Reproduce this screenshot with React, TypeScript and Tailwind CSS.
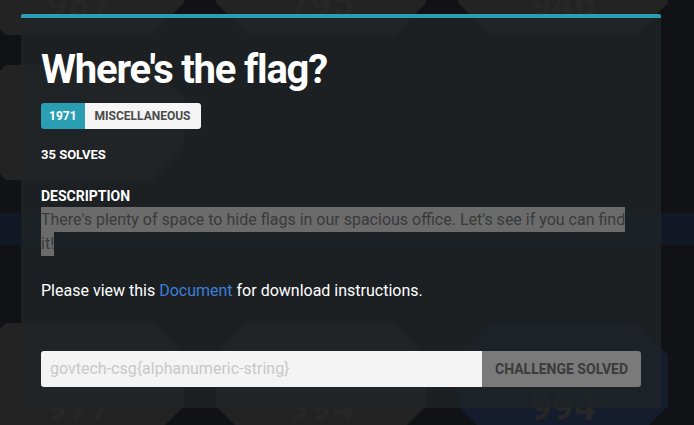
const heading = "font-['Roboto','Liberation_Sans',sans-serif] font-bold";
const body = "font-['Roboto','Liberation_Sans',sans-serif]";

function Card({ title, value, solved }: { title?: string; value: string; solved?: boolean }) {
  return (
    <div
      className={`flex h-full w-[210px] shrink-0 flex-col items-center justify-end pb-3 [clip-path:polygon(32px_0,calc(100%-32px)_0,100%_32px,100%_calc(100%-32px),calc(100%-32px)_100%,32px_100%,0_calc(100%-32px),0_32px)] ${
        solved ? 'bg-[#141c2e]' : 'bg-[#232323]'
      }`}
    >
      {title && <p className={`${heading} text-[15px] text-[#272727]`}>{title}</p>}
      <p className={`${heading} text-[38px] leading-none text-[#272727]`}>{value}</p>
    </div>
  );
}

export default function App() {
  return (
    <div className="relative h-[425px] w-[694px] overflow-hidden bg-[#101215]">
      {/* challenge board behind the modal */}
      <div className="-ml-[26px] -mt-[80px] flex flex-col">
        <div className="flex h-[115px] gap-[32px]">
          <Card value="987" />
          <Card value="795" />
          <Card value="946" />
        </div>
        <div className="mt-[30px] flex h-[115px] gap-[32px]">
          <Card title="Where's the flag?" value="1971" />
        </div>
        <div className="mt-[33px] h-[32px] w-[760px] bg-[#121826]" />
        <div className="mt-[78px] flex h-[115px] gap-[32px]">
          <Card value="977" />
          <Card value="994" />
          <Card title="All about Kompany!" value="994" solved />
        </div>
      </div>

      {/* modal */}
      <div className="absolute left-[21px] top-[14px] flex h-[394px] w-[640px] flex-col rounded-t-[2px] border-t-4 border-[#2a9fb3] bg-[#1f2427]/80 px-5 pt-[28px]">
        <h1 className={`${heading} text-[40px] leading-[48px] tracking-[-1.2px] text-white`}>Where's the flag?</h1>
        <div className={`${heading} mt-[9px] flex h-[26px] w-fit overflow-hidden rounded-[3px] text-[12px]`}>
          <span className="flex items-center bg-[#2a9fb3] px-[8px] text-white">1971</span>
          <span className="flex items-center bg-[#f5f5f5] px-[10px] text-[#4a4a4a]">MISCELLANEOUS</span>
        </div>
        <p className={`${heading} mt-[16px] text-[13px] leading-[20px] text-white`}>35 SOLVES</p>
        <p className={`${heading} mt-[22px] text-[14px] leading-[18px] text-white`}>DESCRIPTION</p>
        <p className={`${body} mt-[3px] w-[590px] text-[16px] leading-[24px] text-[#3a3a3a]`}>
          <span className="bg-[#6b6b6b] py-[3px]">
            There's plenty of space to hide flags in our spacious office. Let's see if you can find it!
          </span>
        </p>
        <p className={`${body} mt-[23px] text-[16px] leading-[24px] text-white`}>
          Please view this <span className="text-[#3b7fd9]">Document</span> for download instructions.
        </p>
        <div className="mt-[48px] flex h-[36px]">
          <div
            className={`${body} flex w-[441px] items-center rounded-l-[3px] bg-[#f4f4f4] px-[9px] text-[16px] text-[#c8c8c8]`}
          >
            govtech-csg{'{'}alphanumeric-string{'}'}
          </div>
          <div
            className={`${heading} flex w-[159px] items-center justify-center rounded-r-[3px] bg-[#7a7a7a] text-[14px] text-[#3a3a3a]`}
          >
            CHALLENGE SOLVED
          </div>
        </div>
      </div>
    </div>
  );
}
